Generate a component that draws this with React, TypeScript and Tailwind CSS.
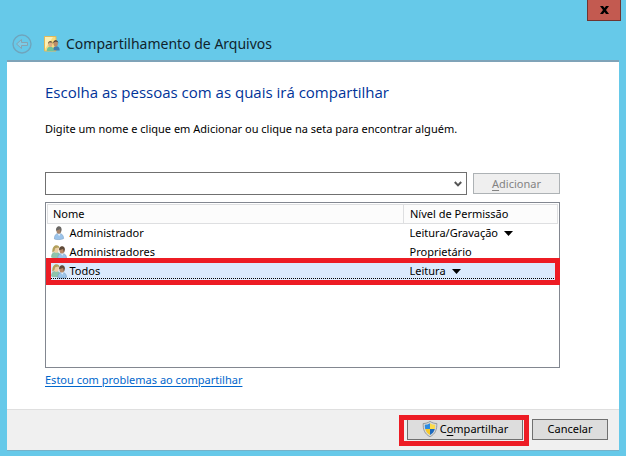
import { useState } from "react";

type Entry = {
  name: string;
  group: boolean;
  level: string;
  editable: boolean;
};

const entries: Entry[] = [
  { name: "Administrador", group: false, level: "Leitura/Gravação", editable: true },
  { name: "Administradores", group: true, level: "Proprietário", editable: false },
  { name: "Todos", group: true, level: "Leitura", editable: true },
];

function BackIcon() {
  return (
    <svg viewBox="0 0 20 20" className="size-5" fill="none">
      <circle cx="10" cy="10" r="9" stroke="#6fa5bd" strokeWidth="1.4" />
      <path
        d="M4.500 10 9.500 5.500V8.500H15.500V11.500H9.500V14.500Z"
        fill="#7dcbe6"
        stroke="#86a3b1"
        strokeWidth="1"
        strokeLinejoin="round"
      />
    </svg>
  );
}

function FolderIcon() {
  return (
    <svg viewBox="0 0 16 16" className="size-4">
      <path d="M.5.5h11.500v14.500H.5Z" fill="#f6dc82" stroke="#e0b95a" strokeWidth="1" />
      <path d="M1 1h8L1 13Z" fill="#fdf0b4" />
      <path d="M9 14.500c0-3 1-4.200 3.200-4.200s3.500 1.200 3.500 4.200Z" fill="#3f7fb0" />
      <ellipse cx="11.700" cy="7.500" rx="2.200" ry="2.900" fill="#b98a68" />
      <path d="M9.200 7.200c0-4 5.200-4 5.100.2l-.7-1.600-2.700-.4Z" fill="#3b3430" />
      <path d="M2.800 15c0-3 1.200-4.300 3.500-4.300s3.500 1.300 3.500 4.300Z" fill="#6fc39a" />
      <ellipse cx="6.300" cy="8.300" rx="2" ry="2.800" fill="#dcae84" />
      <path d="M3.900 8.200c0-4.400 4.900-4.300 4.800-.2L7.700 6.400l-2.600.2Z" fill="#6b5a3c" />
    </svg>
  );
}

function UserIcon() {
  return (
    <svg viewBox="0 0 16 16" className="size-4">
      <path d="M3.400 14c0-3.800 1.400-5.600 4.400-5.600s4.800 1.800 4.800 5.200c-2.200 1.200-7 1.300-9.200.4Z" fill="#9cc4ea" stroke="#7aa0c6" strokeWidth=".6" />
      <path d="m6.400 8.400 1.800 2.800 1.500-2.800Z" fill="#e4effa" />
      <ellipse cx="7.800" cy="5.200" rx="2.400" ry="3.500" fill="#a8856a" />
      <path d="M5 5.800C4.400.2 10.700-.2 10.600 4.600L9.800 8 9 4.200Z" fill="#6a6865" />
    </svg>
  );
}

function GroupIcon() {
  return (
    <svg viewBox="0 0 16 16" className="size-4">
      <path d="M.5 13.200c0-3.400 1.400-5 4.300-5s4.600 1.500 4.600 4.800c-2 1-6.800 1-8.900.2Z" fill="#8ec4ac" stroke="#74a892" strokeWidth=".5" />
      <ellipse cx="5.200" cy="5.400" rx="2.500" ry="3.400" fill="#ecd0a4" />
      <path d="M1.400 8.800C.4-.4 9-.4 8.500 5L7 3.400 4.200 4.200 3.400 7Z" fill="#b3a05c" />
      <path d="M6.800 14.600c0-3.600 1.300-5.200 4.200-5.200s4.500 1.700 4.500 4.800c-2.100 1.200-6.600 1.300-8.700.4Z" fill="#9cc4ea" stroke="#7aa0c6" strokeWidth=".6" />
      <path d="m9.700 9.300 1.600 2.400 1.400-2.400Z" fill="#e4effa" />
      <ellipse cx="10.900" cy="6" rx="2.500" ry="3.500" fill="#b88a68" />
      <path d="M8.100 6.200c-.4-5 5.800-5.200 5.800-.8l-.9 3.300-.9-3.700Z" fill="#5e4a3a" />
    </svg>
  );
}

function ShieldIcon() {
  return (
    <svg viewBox="0 0 16 16" className="size-4">
      <path d="M8 .4C6 1.800 3.700 2.500 1.200 2.500c-.2 6 1.300 10.400 6.800 13.200 5.500-2.800 7-7.200 6.800-13.200C12.300 2.500 10 1.800 8 .4Z" fill="#d8dadb" stroke="#85898c" strokeWidth=".8" />
      <path d="M8 2.200C6.300 3.200 4.600 3.700 2.800 3.800c0 1.500.1 2.900.4 4.200H8Z" fill="#2d8be0" />
      <path d="M8 2.200c1.700 1 3.400 1.500 5.200 1.600 0 1.500-.1 2.900-.4 4.200H8Z" fill="#fbdb4c" />
      <path d="M3.200 8c.7 2.600 2.100 4.600 4.800 6V8Z" fill="#f8c928" />
      <path d="M12.800 8c-.7 2.600-2.100 4.600-4.800 6V8Z" fill="#1c69bd" />
    </svg>
  );
}

export default function App() {
  const [person, setPerson] = useState("");
  const [selected, setSelected] = useState("Todos");

  return (
    <div className="flex min-h-screen flex-col bg-[#66c9e9] px-[7px] pb-[5px] font-['Noto_Sans','Open_Sans',sans-serif] text-[11px] leading-4 text-black">
      <header className="flex h-[60px] items-start justify-between">
        <div className="flex items-center gap-3 pt-[34px] pl-[5px]">
          <button type="button" aria-label="Voltar" disabled>
            <BackIcon />
          </button>
          <div className="flex items-center gap-1.5">
            <FolderIcon />
            <h1 className="text-[14px] leading-5 text-[#10242c]">Compartilhamento de Arquivos</h1>
          </div>
        </div>
        <button
          type="button"
          aria-label="Fechar"
          className="-mr-0.5 flex h-[21px] w-[34px] items-center justify-center border border-t-0 border-[#6e3531] bg-[#c35a50]"
        >
          <svg viewBox="0 0 9 8" className="h-2 w-[9px]">
            <path d="M0 0h3l1.500 2L6 0h3L6 4l3 4H6L4.500 6 3 8H0l3-4Z" fill="#000" />
          </svg>
        </button>
      </header>

      <div className="flex flex-1 flex-col border-t-2 border-b border-t-[#7fa3b8] border-b-[#76b2c9] bg-white">
        <main className="flex flex-1 flex-col pt-[18px] pr-[59px] pb-[21px] pl-[38px]">
          <h2 className="font-['Open_Sans','Noto_Sans',sans-serif] text-[15px] leading-6 text-[#003399]">
            Escolha as pessoas com as quais irá compartilhar
          </h2>
          <p className="mt-[17px]">
            Digite um nome e clique em Adicionar ou clique na seta para encontrar alguém.
          </p>

          <form className="mt-[35px] flex items-center gap-1.5" onSubmit={(event) => event.preventDefault()}>
            <div className="flex h-[23px] flex-1 items-center border border-[#707070] bg-white">
              <input
                type="text"
                aria-label="Nome"
                value={person}
                onChange={(event) => setPerson(event.target.value)}
                className="h-full min-w-0 flex-1 px-1 outline-none"
              />
              <button type="button" aria-label="Encontrar pessoas" className="flex h-full w-4 items-center justify-center">
                <svg viewBox="0 0 8 6" className="h-1.5 w-2" fill="none">
                  <path d="m.8 1 3.200 3.400L7.200 1" stroke="#555" strokeWidth="2" />
                </svg>
              </button>
            </div>
            <button
              type="submit"
              disabled={!person}
              className="h-[21px] w-[87px] border border-[#adb2b5] bg-[#efefef] text-[#838383]"
            >
              <span className="underline underline-offset-2">A</span>dicionar
            </button>
          </form>

          <div className="mt-[7px] flex-1 border border-[#828790] p-px">
            <table className="w-full table-fixed border-collapse text-left">
              <thead>
                <tr className="h-[19px]">
                  <th className="border border-[#dedfe1] bg-[#fcfcfc] px-[5px] py-0 font-normal">Nome</th>
                  <th className="w-[154px] border border-[#dedfe1] bg-[#fcfcfc] px-1.5 py-0 font-normal">
                    Nível de Permissão
                  </th>
                </tr>
              </thead>
              <tbody>
                {entries.map((entry) => (
                  <tr
                    key={entry.name}
                    onClick={() => setSelected(entry.name)}
                    className={entry.name === selected ? "relative h-[19px] bg-[#dbeafd]" : "h-[19px]"}
                  >
                    <td className="py-0 pl-[3px]">
                      <div className="flex items-center gap-[3px]">
                        {entry.group ? <GroupIcon /> : <UserIcon />}
                        <span>{entry.name}</span>
                      </div>
                      {entry.name === selected && (
                        <>
                          <div className="pointer-events-none absolute inset-x-0 bottom-0.5 border-b border-dotted border-black" />
                          <div className="pointer-events-none absolute -inset-x-0.5 -inset-y-1 border-[5px] border-[#ed1c24]" />
                        </>
                      )}
                    </td>
                    <td className="px-1.5 py-0">
                      {entry.editable ? (
                        <div className="flex items-center gap-1.5">
                          <select
                            aria-label={`Permissão de ${entry.name}`}
                            defaultValue={entry.level}
                            className="appearance-none bg-transparent [field-sizing:content]"
                          >
                            <option>Leitura</option>
                            <option>Leitura/Gravação</option>
                          </select>
                          <svg viewBox="0 0 9 5" className="h-[5px] w-[9px]">
                            <path d="M0 0h9L4.500 5Z" fill="#000" />
                          </svg>
                        </div>
                      ) : (
                        entry.level
                      )}
                    </td>
                  </tr>
                ))}
              </tbody>
            </table>
          </div>

          <a href="#ajuda" className="mt-1 self-start text-[#0066cc] underline underline-offset-2">
            Estou com problemas ao compartilhar
          </a>
        </main>

        <footer className="flex h-[41px] items-center justify-end gap-[9px] border-t border-[#dfdfdf] bg-[#f0f0f0] pr-[11px] pb-0.5">
          <div className="relative">
            <button
              type="button"
              className="flex h-[21px] w-[116px] items-center justify-center gap-0.5 border border-[#707070] bg-[#dddddd]"
            >
              <ShieldIcon />
              <span>
                C<span className="underline underline-offset-2">o</span>mpartilhar
              </span>
            </button>
            <div className="pointer-events-none absolute -top-1 -right-1.5 -bottom-1.5 -left-2 border-[5px] border-[#ed1c24]" />
          </div>
          <button type="button" className="h-[21px] w-[76px] border border-[#707070] bg-[#dddddd]">
            Cancelar
          </button>
        </footer>
      </div>
    </div>
  );
}
